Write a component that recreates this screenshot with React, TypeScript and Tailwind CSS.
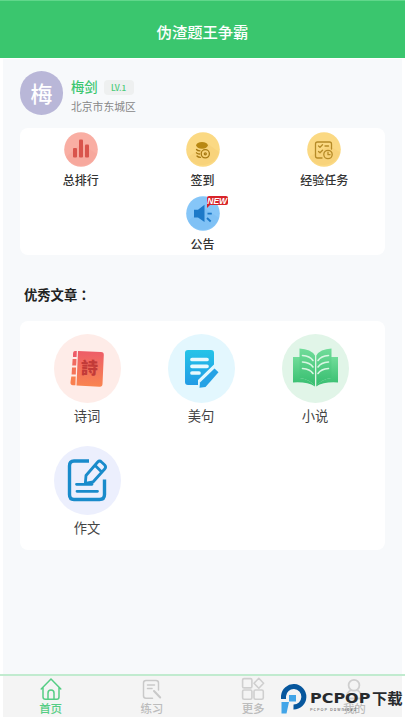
import type { ReactNode } from 'react';

const ChartIcon = () => (
  <svg viewBox="0 0 34 35" className="h-[35px] w-[34px]">
    <ellipse cx="17" cy="17.5" rx="16.8" ry="17.3" fill="#f9aea3" />
    <path d="M2 25 L17 12 L33 22 A17 17 0 0 1 2 25Z" fill="#f5a196" opacity="0.45" />
    <g fill="#d9544c">
      <rect x="9" y="16" width="4" height="9.5" rx="1" />
      <rect x="15" y="7.5" width="4" height="18" rx="1" />
      <rect x="21" y="12.5" width="4" height="13" rx="1" />
    </g>
  </svg>
);

const CoinsIcon = () => (
  <svg viewBox="0 0 34 35" className="h-[35px] w-[34px]">
    <ellipse cx="17" cy="17.5" rx="16.8" ry="17.3" fill="#fbd983" />
    <path d="M2 25 L22 12 L33 20 A17 17 0 0 1 2 25Z" fill="#f3cb70" opacity="0.45" />
    <ellipse cx="16" cy="13.3" rx="5.8" ry="3.4" fill="#b98812" />
    <g fill="none" stroke="#a87a13" strokeWidth="1.3" strokeLinecap="round">
      <path d="M10.5 17.5 Q11.5 18.8 14 18.8 M10.5 20.8 Q11.5 22 13.5 22 M11 24 Q12 25.3 14.5 25.3" />
      <circle cx="19.3" cy="21.8" r="4.1" />
      <circle cx="19.3" cy="21.8" r="1" />
    </g>
  </svg>
);

const TaskIcon = () => (
  <svg viewBox="0 0 34 35" className="h-[35px] w-[34px]">
    <ellipse cx="17" cy="17.5" rx="16.8" ry="17.3" fill="#fbd983" />
    <path d="M2 25 L22 14 L33 20 A17 17 0 0 1 2 25Z" fill="#f3cb70" opacity="0.45" />
    <g fill="none" stroke="#b68b27" strokeWidth="1.3" strokeLinecap="round" strokeLinejoin="round">
      <path d="M15 26 H10.5 Q8.5 26 8.5 24 V12 Q8.5 10 10.5 10 H22.5 Q24.5 10 24.5 12 V17" />
      <path d="M11.5 14 L13 15.2 L15.5 12.8 M18 14 H21.5 M11.5 19.5 L13 20.7 L15.5 18.3" />
      <circle cx="21" cy="22.5" r="4.2" />
      <path d="M21 20.2 V22.7 H23" />
    </g>
  </svg>
);

const SpeakerIcon = () => (
  <svg viewBox="0 0 34 35" className="h-[35px] w-[34px]">
    <ellipse cx="17" cy="17.5" rx="16.8" ry="17.3" fill="#86c6f8" />
    <path d="M2 25 L18 12 L33 22 A17 17 0 0 1 2 25Z" fill="#75baf0" opacity="0.4" />
    <path d="M8 13.8 H12 L18.5 8.8 V26 L12 21.5 H8Z" fill="#1c79c8" />
    <path d="M21.5 17.7 H25.8 M21 22 L24.7 25.5" stroke="#1c79c8" strokeWidth="1.8" />
  </svg>
);

const PoemIcon = () => (
  <div className="relative">
    <svg viewBox="0 0 67 69" className="h-[69px] w-[67px]">
      <defs>
        <linearGradient id="poem" x1="0" y1="0" x2="0" y2="1">
          <stop offset="0" stopColor="#ed5c68" />
          <stop offset="1" stopColor="#f98550" />
        </linearGradient>
      </defs>
      <ellipse cx="33.5" cy="34.5" rx="33.5" ry="34.5" fill="#feece8" />
      <path d="M24 17 L47 18 Q50 18.2 49.8 21 L48.5 50 Q48.3 53 45.5 52.7 L22.5 51.5Z" fill="url(#poem)" />
      <path d="M22.8 17 H21 Q19 17 19 20 V23 H22.6Z" fill="#ed5c68" />
      <path d="M18.6 25 H22.5 L22.2 31.5 H18.2Z" fill="#f06a61" />
      <path d="M18 33.5 H22 L21.8 40.5 H17.6Z" fill="#f47358" />
      <path d="M17.3 42.5 H21.7 L21.4 51.3 H19 Q16 51 16.5 48Z" fill="#f98050" />
    </svg>
    <span className="absolute top-[23px] left-[27px] rotate-2 text-[17px] leading-[20px] font-black text-[#c23a38]">詩</span>
  </div>
);

const NoteIcon = () => (
  <svg viewBox="0 0 67 69" className="h-[69px] w-[67px]">
    <defs>
      <linearGradient id="note" x1="0" y1="0" x2="0" y2="1">
        <stop offset="0" stopColor="#25c4e8" />
        <stop offset="1" stopColor="#229be5" />
      </linearGradient>
    </defs>
    <ellipse cx="33.5" cy="34.5" rx="33.5" ry="34.5" fill="#e3f7fe" />
    <path d="M20 16 H43 Q46 16 46 19 V30.5 L30 46 V51 H20 Q17 51 17 48 V19 Q17 16 20 16Z" fill="url(#note)" />
    <path d="M24 25.5 H39 M24 32.3 H39 M24 39 H31" stroke="#e8f9fe" strokeWidth="3.7" strokeLinecap="round" />
    <path d="M46.5 34.5 L50.5 38.3 L37.5 53 L31.5 53.7 L32 48.5Z" fill="#26a2e5" />
  </svg>
);

const BookIcon = () => (
  <svg viewBox="0 0 67 69" className="h-[69px] w-[67px]">
    <defs>
      <linearGradient id="book" x1="0" y1="0" x2="0" y2="1">
        <stop offset="0" stopColor="#71dc9a" />
        <stop offset="1" stopColor="#35bd6e" />
      </linearGradient>
    </defs>
    <ellipse cx="33.5" cy="34.5" rx="33.5" ry="34.5" fill="#e1f5e8" />
    <path d="M11 23 H18 V44 Q28 45 33 52.5 Q25 47.5 11 48.5Z M56 23 H49 V44 Q39 45 34 52.5 Q42 47.5 56 48.5Z" fill="url(#book)" />
    <path d="M17.5 14.5 Q29 15 33 21.5 V52.5 Q28 45 17.5 44Z M49.5 14.5 Q38 15 34.3 21.5 V52.5 Q39 45 49.5 44Z" fill="url(#book)" />
    <path d="M20.5 21.5 Q28 22 31 26.5 M20.5 28 Q28 28.5 31 33 M20.5 34.5 Q28 35 31 39.5 M46.5 21.5 Q39 22 36 26.5 M46.5 28 Q39 28.5 36 33 M46.5 34.5 Q39 35 36 39.5" fill="none" stroke="#d9f6e3" strokeWidth="1.6" strokeLinecap="round" />
  </svg>
);

const WriteIcon = () => (
  <svg viewBox="0 0 67 69" className="h-[69px] w-[67px]">
    <ellipse cx="33.5" cy="34.5" rx="33.5" ry="34.5" fill="#eceffd" />
    <g fill="none" stroke="#198bcb" strokeWidth="3.4" strokeLinejoin="round">
      <path d="M35 15 H20 Q15.5 15 15.5 20 V48.5 Q15.5 53.5 20 53.5 H45.5 Q50.5 53.5 50.5 48.5 V33.5" />
      <path d="M32 29.5 L43.7 16 Q45.5 14 47.5 16 L50.7 19 Q52.5 21 50.7 23 L39 36 L31.3 37.3Z M41.2 19.5 L47.7 26" strokeWidth="2.8" />
      <path d="M22.5 38.3 H38 M23 45.3 H43.5" strokeWidth="2.8" strokeLinecap="round" />
    </g>
  </svg>
);

const HomeIcon = () => (
  <svg viewBox="0 0 24 24" className="size-6" fill="none" stroke="#55cd84" strokeWidth="1.5" strokeLinejoin="round" strokeLinecap="round">
    <path d="M2.2 12 L12 2 L21.8 12 M4 10.5 V20 Q4 22.3 6.5 22.3 H17.8 Q20 22.3 20 20 V10.5" />
    <path d="M9 22 V16 Q9 13 12 13 Q15 13 15 16 V22" />
  </svg>
);

const PracticeIcon = () => (
  <svg viewBox="0 0 24 24" className="size-6" fill="none" stroke="#c9c9c9" strokeWidth="1.5" strokeLinecap="round">
    <path d="M12.5 21.3 H6 Q3.5 21.3 3.5 18.8 V6 Q3.5 3.5 6 3.5 H16 Q18.5 3.5 18.5 6 V13 M7.5 8 H14.5 M7.5 11.5 H12" />
    <path d="M14 14 L20.2 20.5" strokeWidth="2" />
  </svg>
);

const MoreIcon = () => (
  <svg viewBox="0 0 24 24" className="size-6" fill="none" stroke="#cfcfcf" strokeWidth="1.6" strokeLinejoin="round">
    <rect x="1.6" y="1.6" width="9.3" height="9.3" rx="1.5" />
    <rect x="1.6" y="13" width="9.3" height="9.3" rx="1.5" />
    <rect x="13" y="13" width="9.3" height="9.3" rx="1.5" />
    <path d="M17.8 1.3 L22.6 6.3 L17.8 11.2 L13 6.3Z" />
  </svg>
);

const MineIcon = () => (
  <svg viewBox="0 0 24 24" className="size-6" fill="none" stroke="#cfcfcf" strokeWidth="1.8">
    <circle cx="12" cy="8.3" r="5.4" />
    <path d="M9 13 Q4.5 15 4.5 21.5 H19.5 Q19.5 15 15 13" />
  </svg>
);

const Shortcut = ({ icon, label }: { icon: ReactNode; label: string }) => (
  <div className="flex h-16 flex-col items-center">
    {icon}
    <span className="mt-1 text-[12px] leading-[18px] font-medium text-[#333]">{label}</span>
  </div>
);

const articles = [
  { label: '诗词', icon: <PoemIcon /> },
  { label: '美句', icon: <NoteIcon /> },
  { label: '小说', icon: <BookIcon /> },
  { label: '作文', icon: <WriteIcon /> },
];

const tabs = [
  { label: '首页', icon: <HomeIcon />, active: true },
  { label: '练习', icon: <PracticeIcon />, active: false },
  { label: '更多', icon: <MoreIcon />, active: false },
  { label: '我的', icon: <MineIcon />, active: false },
];

const Watermark = () => (
  <div className="absolute top-[7px] left-[280px] flex items-start">
    <svg viewBox="0 0 28 32" className="h-8 w-7">
      <path d="M3.5 16 V13 A10.2 10.2 0 1 1 13.5 24" fill="none" stroke="#07579d" strokeWidth="5" />
      <path d="M9 12 H16 V18.5 H9Z M1.5 19 H9 L6.5 30.5 H1.5Z" fill="#42a5e8" />
    </svg>
    <div className="pt-[7px] pl-[2px] whitespace-nowrap">
      <div className="flex h-[17px] items-center text-[#272a2d]">
        <div className="flex w-[62px]">
          <span className="origin-left scale-x-[1.14] font-['DejaVu_Sans'] text-[14px] leading-[17px] font-bold">PCPOP</span>
        </div>
        <span className="-mt-[2px] text-[15.3px] leading-[17px] font-bold">下载</span>
      </div>
      <div className="text-[4px] leading-[5px] tracking-[1px] text-[#555]">PCPOP Download</div>
    </div>
  </div>
);

export default function App() {
  return (
    <div className="flex h-[720px] w-[405px] flex-col bg-white font-['Noto_Sans_CJK_SC',sans-serif]">
      <header className="flex h-[58px] items-center justify-center border-t border-[#60d78b] bg-[#3ac66e] pt-[3px] text-[15.3px] font-medium text-white">
        伪渣题王争霸
      </header>

      <main className="mx-[3px] mt-px flex-1 bg-[#f7f9fb] px-[17px] pt-3">
        <section className="flex h-[57px] items-start">
          <div className="flex h-11 w-[43px] items-center justify-center rounded-full bg-[#b9b7d8] pb-px text-[22px] font-medium text-white">梅</div>
          <div className="ml-2 pt-[6px]">
            <div className="flex items-center gap-[6px]">
              <span className="text-[13.3px] leading-[19px] font-medium text-[#3bc66f]">梅剑</span>
              <span className="mt-[2px] h-[15px] w-[30px] rounded-sm bg-[#eef0f0] text-center text-[8.3px] leading-[15px] font-medium text-[#4bcb79]">LV.1</span>
            </div>
            <p className="mt-[2px] text-[10.8px] leading-[17px] text-[#888]">北京市东城区</p>
          </div>
        </section>

        <section className="flex h-[127px] flex-wrap content-start justify-center rounded-lg bg-white pt-1">
          <div className="w-1/3"><Shortcut icon={<ChartIcon />} label="总排行" /></div>
          <div className="w-1/3"><Shortcut icon={<CoinsIcon />} label="签到" /></div>
          <div className="w-1/3"><Shortcut icon={<TaskIcon />} label="经验任务" /></div>
          <div className="relative w-1/3">
            <Shortcut icon={<SpeakerIcon />} label="公告" />
            <svg viewBox="0 0 5 5" className="absolute top-2 left-[65px] size-[5px]"><path d="M0 0 H4 L0 4Z" fill="#d8232a" /></svg>
            <span className="absolute top-0 left-[65px] h-[9px] w-[21px] rounded-[2px] bg-[#d8232a] text-center font-['Liberation_Sans'] text-[8.5px] leading-[10px] font-bold text-white italic">NEW</span>
          </div>
        </section>

        <h2 className="mt-[30px] pl-1 text-[13.3px] leading-5 font-bold text-[#222]">
          优秀文章<span className="font-['Noto_Sans_CJK_TC',sans-serif]" lang="zh-TW">：</span>
        </h2>

        <section className="mt-4 grid h-[229px] grid-cols-[repeat(3,114px)] content-start rounded-lg bg-white pt-[13px] pl-[10px]">
          {articles.map((item) => (
            <div key={item.label} className="flex h-28 flex-col items-center">
              {item.icon}
              <span className="mt-[3px] text-[13.3px] leading-5 text-[#444]">{item.label}</span>
            </div>
          ))}
        </section>
      </main>

      <nav className="relative mb-[3px] h-[43px] border-t-2 border-[#c1ebcf] px-[3px]">
        <div className="h-full bg-[#f4f4f4]">
          <div className="-mx-[3px] grid grid-cols-4">
            {tabs.map((tab) => (
              <div key={tab.label} className={`flex flex-col items-center pt-px ${tab.active ? 'text-[#55cd84]' : 'text-[#bcbcbc]'}`}>
                {tab.icon}
                <span className="-mt-px text-[11.5px] leading-4 font-medium">{tab.label}</span>
              </div>
            ))}
          </div>
        </div>
        <Watermark />
      </nav>
    </div>
  );
}
